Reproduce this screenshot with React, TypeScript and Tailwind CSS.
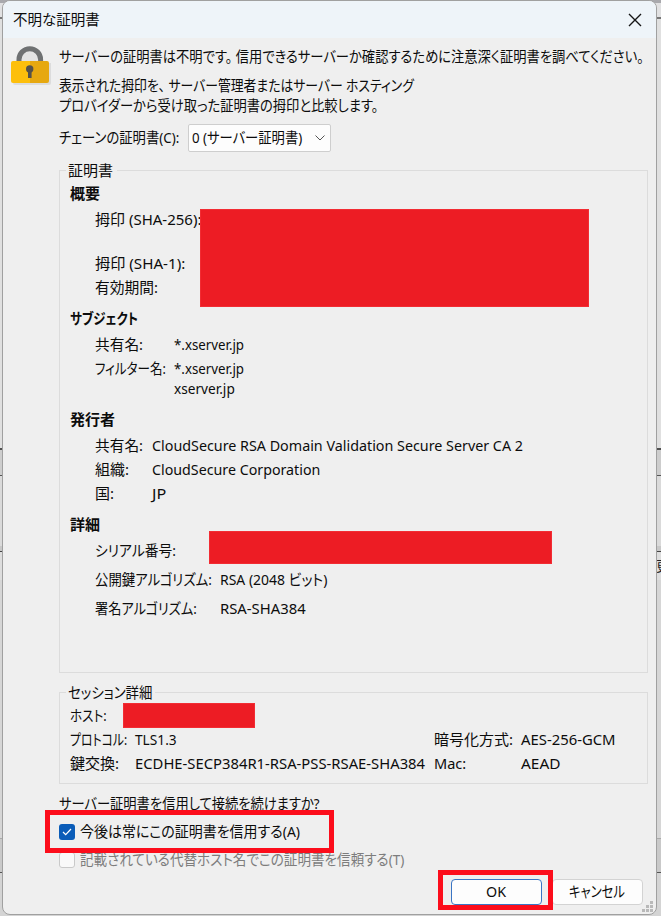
import { useLayoutEffect, useRef, useState } from "react";

// Text squeezed or stretched horizontally so that it fills exactly `w` pixels.
// Japanese punctuation keeps a little room after it.
function Fit({ w, children, className = "" }: { w: number; children: string; className?: string }) {
  const ref = useRef<HTMLSpanElement>(null);
  const [scale, setScale] = useState(1);
  useLayoutEffect(() => {
    const measure = () => {
      if (ref.current && ref.current.offsetWidth) setScale(w / ref.current.offsetWidth);
    };
    measure();
    document.fonts?.ready.then(measure);
  }, [w]);
  return (
    <span className={`block h-5 shrink-0 leading-5 whitespace-nowrap ${className}`} style={{ width: w }}>
      <span ref={ref} className="inline-block origin-left" style={{ transform: `translateY(-1px) scaleX(${scale})` }}>
        {children.split(/([、。])/).map((part, i) =>
          i % 2 ? (
            <span key={i} className="mr-[4px]">
              {part}
            </span>
          ) : (
            part
          ),
        )}
      </span>
    </span>
  );
}

function Row({ label, lw, value, vw = 0, col }: { label: string; lw: number; value?: string; vw?: number; col: string }) {
  return (
    <div className="flex h-5">
      <div className={`shrink-0 ${col}`}>{label && <Fit w={lw}>{label}</Fit>}</div>
      {value && <Fit w={vw}>{value}</Fit>}
    </div>
  );
}

function Lock() {
  return (
    <svg width="44" height="44" viewBox="0 0 44 44" className="block">
      <path d="M3 18h38v20a2 2 0 0 1-2 2H5a2 2 0 0 1-2-2z" fill="#dcdcdc" />
      <path d="M9 16V14a10.800 10.800 0 0 1 21.600 0v2" transform="translate(0 0.500)" fill="#e3e3e3" stroke="#6f7172" strokeWidth="5" />
      <path d="M3 16h17.500v22H3a2 2 0 0 1-2-2V18a2 2 0 0 1 2-2z" fill="#fdbf0c" />
      <path d="M20 16h17a2 2 0 0 1 2 2v18a2 2 0 0 1-2 2H20z" fill="#e6a810" />
      <circle cx="19.700" cy="24" r="3.700" fill="#54514b" />
      <path d="M18 25h3.600v8H18z" fill="#54514b" />
    </svg>
  );
}

function Grip() {
  return (
    <svg width="12" height="12" className="absolute top-[900px] left-[639px]" fill="#b9b9b9">
      <path d="M8 0h3v3H8zM4 4h3v3H4zM8 4h3v3H8zM0 8h3v3H0zM4 8h3v3H4zM8 8h3v3H8z" />
    </svg>
  );
}

function WindowBehind() {
  return (
    <div className="absolute inset-0 flex flex-col bg-[#d9d9d9]">
      <div className="h-[3px] bg-[#a9a9ad]" />
      <div className="h-[14px] bg-[#e1e1e2]" />
      <div className="h-[2px] bg-[#777]" />
      <div className="h-[429px] bg-[#e0e0e0]" />
      <div className="h-[2px] bg-[#505050]" />
      <div className="h-[25px] bg-[#cdcdcd]" />
      <div className="h-px bg-[#555]" />
      <div className="h-[70px] bg-[#dadada]" />
      <div className="h-[5px] bg-[#c8c8c8]" />
      <div className="h-px bg-[#444]" />
      <div className="flex h-[28px] items-center justify-end overflow-hidden bg-[#ddd]">
        <span className="-mr-[9px] text-[14px] text-[#222]">更</span>
      </div>
      <div className="h-[258px] bg-[#d6d6d6]" />
      <div className="h-px bg-[#aaa]" />
      <div className="h-[33px] bg-[#c9c9c9]" />
      <div className="h-px bg-[#555]" />
      <div className="grow bg-[#d4d4d4]" />
    </div>
  );
}

export default function App() {
  return (
    <div className="relative h-[916px] w-[661px] overflow-hidden font-['Noto_Sans','Noto_Sans_CJK_JP',sans-serif] text-[15px] leading-5 text-[#0c0c0c] [font-feature-settings:'palt']">
      <WindowBehind />
      <div className="relative ml-[2px] h-[915px] w-[655px] overflow-hidden rounded-lg border border-[#a0a0a0] bg-[#efefef]">
        <header className="flex h-[37px] items-center justify-between bg-[#eef4f9] pr-[14px] pl-[10px]">
          <Fit w={87} className="text-[14.5px]">不明な証明書</Fit>
          <svg width="14" height="14" viewBox="0 0 14 14" stroke="#151515" strokeWidth="1.400" fill="none">
            <path d="M1 1l12 12M13 1L1 13" />
          </svg>
        </header>

        <div className="flex">
          <div className="w-[56px] shrink-0 pt-[7px] pl-[7px]">
            <Lock />
          </div>
          <main className="w-[589px] shrink-0 pt-[9px]">
            <Fit w={588}>サーバーの証明書は不明です。信用できるサーバーか確認するために注意深く証明書を調べてください。</Fit>
            <div className="mt-[9px]">
              <Fit w={355}>表示された拇印を、サーバー管理者またはサーバー ホスティング</Fit>
              <Fit w={323}>プロバイダーから受け取った証明書の拇印と比較します。</Fit>
            </div>
            <div className="mt-[8px] flex h-[28px] items-center">
              <Fit w={120}>チェーンの証明書(C):</Fit>
              <div className="ml-[9px] flex h-[28px] w-[143px] items-center justify-between rounded-[2px] border border-[#cecece] bg-[#fdfdfd] pr-[5px] pl-[3px]">
                <Fit w={110}>0 (サーバー証明書)</Fit>
                <svg width="10" height="6" viewBox="0 0 10 6" fill="none" stroke="#555">
                  <path d="M.5.5L5 5L9.500.5" />
                </svg>
              </div>
            </div>

            <section className="mt-[18px] h-[503px] border border-[#dcdcdc] pl-[10px]">
              <div className="-mt-[10px] -ml-[4px] w-[51px] bg-[#efefef] pl-[2px]">
                <Fit w={45}>証明書</Fit>
              </div>
              <Fit w={30} className="mt-[3px] font-bold">概要</Fit>
              <div className="mt-[6px] pl-[25px]">
                <Row label="拇印 (SHA-256):" lw={106} col="w-[110px]" />
                <div className="h-[24px]" />
                <Row label="拇印 (SHA-1):" lw={90} col="w-[110px]" />
                <div className="h-[4px]" />
                <Row label="有効期間:" lw={63} col="w-[110px]" />
              </div>
              <Fit w={68} className="mt-[11px] font-bold">サブジェクト</Fit>
              <div className="mt-[6px] pl-[25px]">
                <Row label="共有名:" lw={48} value="*.xserver.jp" vw={70} col="w-[79px]" />
                <div className="h-[4px]" />
                <Row label="フィルター名:" lw={71} value="*.xserver.jp" vw={70} col="w-[79px]" />
                <Row label="" lw={0} value="xserver.jp" vw={61} col="w-[79px]" />
              </div>
              <Fit w={45} className="mt-[11px] font-bold">発行者</Fit>
              <div className="mt-[6px] flex flex-col gap-1 pl-[25px]">
                <Row label="共有名:" lw={48} value="CloudSecure RSA Domain Validation Secure Server CA 2" vw={371} col="w-[57px]" />
                <Row label="組織:" lw={34} value="CloudSecure Corporation" vw={168} col="w-[57px]" />
                <Row label="国:" lw={19} value="JP" vw={14} col="w-[57px]" />
              </div>
              <Fit w={30} className="mt-[11px] font-bold">詳細</Fit>
              <div className="mt-[6px] flex flex-col gap-[9px] pl-[25px]">
                <Row label="シリアル番号:" lw={81} col="w-[125px]" />
                <Row label="公開鍵アルゴリズム:" lw={117} value="RSA (2048 ビット)" vw={107} col="w-[125px]" />
                <Row label="署名アルゴリズム:" lw={102} value="RSA-SHA384" vw={86} col="w-[125px]" />
              </div>
            </section>

            <section className="mt-[19px] h-[92px] border border-[#dcdcdc] pl-[10px]">
              <div className="-mt-[10px] -ml-[4px] w-[89px] bg-[#efefef] pl-[2px]">
                <Fit w={84}>セッション詳細</Fit>
              </div>
              <div className="mt-[3px] flex flex-col gap-1">
                <Row label="ホスト:" lw={37} col="w-[65px]" />
                <div className="flex">
                  <div className="w-[364px]">
                    <Row label="プロトコル:" lw={57} value="TLS1.3" vw={42} col="w-[65px]" />
                  </div>
                  <Row label="暗号化方式:" lw={79} value="AES-256-GCM" vw={95} col="w-[87px]" />
                </div>
                <div className="flex">
                  <div className="w-[364px]">
                    <Row label="鍵交換:" lw={49} value="ECDHE-SECP384R1-RSA-PSS-RSAE-SHA384" vw={290} col="w-[65px]" />
                  </div>
                  <Row label="Mac:" lw={32} value="AEAD" vw={39} col="w-[87px]" />
                </div>
              </div>
            </section>

            <Fit w={261} className="mt-[10px]">サーバー証明書を信用して接続を続けますか?</Fit>
            <label className="mt-[8px] flex h-5 items-center gap-[5px]">
              <span className="flex size-4 items-center justify-center rounded-[3px] bg-[#0a5cb8]">
                <svg width="10" height="8" viewBox="0 0 10 8" fill="none" stroke="#fff" strokeWidth="1.200">
                  <path d="M1 4l2.700 2.700L9 1" />
                </svg>
              </span>
              <Fit w={220}>今後は常にこの証明書を信用する(A)</Fit>
            </label>
            <label className="mt-[8px] flex h-5 items-center gap-[5px] text-[#7d7d7d]">
              <span className="size-4 rounded-[3px] border border-[#c9c9c9] bg-[#f9f9f9]" />
              <Fit w={324}>記載されている代替ホスト名でこの証明書を信頼する(T)</Fit>
            </label>
            <div className="mt-[9px] -mr-[5px] ml-[392px] flex gap-[10px]">
              <button className="flex h-[26px] w-[91px] shrink-0 items-center justify-center rounded-[4px] border border-[#3a75c4] bg-[#fdfdfd] pr-[2px]">
                <Fit w={20}>OK</Fit>
              </button>
              <button className="flex h-[26px] w-[91px] shrink-0 items-center justify-center rounded-[4px] border border-[#d3d3d3] bg-[#fdfdfd] pr-[2px]">
                <Fit w={56}>キャンセル</Fit>
              </button>
            </div>
          </main>
        </div>
        <Grip />
      </div>

      {/* redactions and highlight frames laid over the dialog */}
      <div className="absolute top-[209px] left-[200px] h-[98px] w-[389px] border border-[#f22c33] bg-[#ed1c24]" />
      <div className="absolute top-[531px] left-[209px] h-[33px] w-[343px] border border-[#f22c33] bg-[#ed1c24]" />
      <div className="absolute top-[703px] left-[123px] h-[25px] w-[132px] border border-[#f22c33] bg-[#ed1c24]" />
      <div className="absolute top-[810px] left-[45px] h-[43px] w-[289px] border-[5px] border-[#fc0d1b]" />
      <div className="absolute top-[870px] left-[438px] h-[40px] w-[115px] border-[5px] border-[#fc0d1b]" />
    </div>
  );
}
